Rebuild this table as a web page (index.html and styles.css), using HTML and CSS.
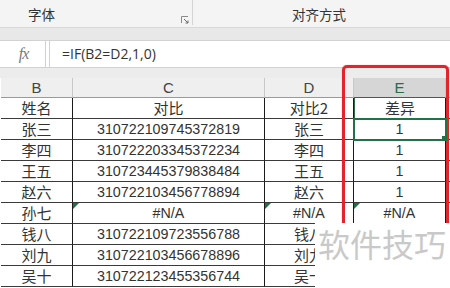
FILE: index.html
```html
<!DOCTYPE html>
<html>
<head>
<meta charset="utf-8">
<link rel="stylesheet" href="styles.css">
</head>
<body>
<div class="page">
  <div class="ribbon">
    <div class="group group-font">
      <span class="group-label">字体</span>
      <svg class="launcher" width="8" height="8" viewBox="0 0 8 8">
        <path d="M0.5 7V0.5H7" fill="none" stroke="#8a8a8a" stroke-width="1"/>
        <path d="M3 3L7 7M7 4.5V7H4.5" fill="none" stroke="#6a6a6a" stroke-width="1"/>
      </svg>
    </div>
    <div class="group group-align">
      <span class="group-label">对齐方式</span>
    </div>
  </div>
  <div class="strip"></div>
  <div class="fbar">
    <div class="fx-box"><span class="fx">fx</span></div>
    <div class="formula">=IF(B2=D2,1,0)</div>
  </div>
  <div class="gap"></div>
  <div class="sheet">
    <div class="hd">B</div><div class="hd">C</div><div class="hd">D</div><div class="hd hd-sel">E</div><div class="hd hd-f"></div>

    <div class="c cn">姓名</div><div class="c cn">对比</div><div class="c cn">对比2</div><div class="c cn e-top">差异</div><div class="c f"></div>
    <div class="c cn">张三</div><div class="c num">310722109745372819</div><div class="c cn">张三</div><div class="c num sel">1<span class="handle"></span></div><div class="c f"></div>
    <div class="c cn">李四</div><div class="c num">310722203345372234</div><div class="c cn">李四</div><div class="c num">1</div><div class="c f"></div>
    <div class="c cn">王五</div><div class="c num">310723445379838484</div><div class="c cn">王五</div><div class="c num">1</div><div class="c f"></div>
    <div class="c cn">赵六</div><div class="c num">310722103456778894</div><div class="c cn">赵六</div><div class="c num">1</div><div class="c f"></div>
    <div class="c cn">孙七</div><div class="c num err">#N/A</div><div class="c num err">#N/A</div><div class="c num err">#N/A</div><div class="c f"></div>
    <div class="c cn">钱八</div><div class="c num">310722109723556788</div><div class="c cn">钱八</div><div class="c num"></div><div class="c f"></div>
    <div class="c cn">刘九</div><div class="c num">310722103456678896</div><div class="c cn">刘九</div><div class="c num"></div><div class="c f"></div>
    <div class="c cn">吴十</div><div class="c num">310722123455356744</div><div class="c cn">吴十</div><div class="c num"></div><div class="c f"></div>
  </div>
  <div class="highlight"></div>
  <div class="watermark">软件技巧</div>
</div>
</body>
</html>
```

FILE: styles.css
```css
html, body {
  margin: 0;
  padding: 0;
}
body {
  width: 450px;
  height: 288px;
  overflow: hidden;
  background: #ffffff;
  font-family: "Noto Sans CJK SC", "Liberation Sans", sans-serif;
  color: #333333;
}
.page {
  position: relative;
  width: 450px;
  height: 288px;
  overflow: hidden;
}
.ribbon {
  height: 28px;
  box-sizing: border-box;
  background: #f4f4f4;
  border-bottom: 1px solid #d8d8d8;
  display: flex;
}
.group {
  position: relative;
  height: 25px;
  display: flex;
  align-items: flex-end;
}
.group-font {
  width: 193px;
  border-right: 1px solid #d4d4d4;
  padding-left: 28px;
  box-sizing: border-box;
}
.group-align {
  padding-left: 99px;
}
.group-label {
  font-size: 13.5px;
  line-height: 14px;
  color: #333;
  padding-bottom: 4px;
}
.launcher {
  position: absolute;
  left: 181px;
  top: 16px;
}
.strip {
  height: 12px;
  background: #e8e8e8;
}
.fbar {
  height: 28px;
  box-sizing: border-box;
  background: #ffffff;
  border-top: 1px solid #d2d2d2;
  border-bottom: 1px solid #d2d2d2;
  display: flex;
}
.fx-box {
  width: 46px;
  box-sizing: border-box;
  border-right: 1px solid #d2d2d2;
  display: flex;
  align-items: center;
  justify-content: center;
}
.fx {
  font-family: "Liberation Serif", serif;
  font-style: italic;
  font-size: 16px;
  color: #7a7a7a;
  letter-spacing: -1px;
  margin-left: 2px;
}
.formula {
  flex: 1;
  margin-left: 3px;
  border-left: 1px solid #d2d2d2;
  padding-left: 12px;
  font-family: "Open Sans", "Liberation Sans", sans-serif;
  font-size: 14px;
  line-height: 26px;
  color: #333;
}
.gap {
  height: 10px;
  background: #ececec;
}
.sheet {
  display: grid;
  grid-template-columns: 72px 192px 89px 92px 5px;
  grid-template-rows: 20px repeat(9, 21px);
  padding-left: 1px;
  background: #ffffff;
}
.hd {
  background: #efefef;
  border-right: 1px solid #c8c8c8;
  border-bottom: 1px solid #9a9a9a;
  box-sizing: border-box;
  font-family: "Liberation Sans", sans-serif;
  font-size: 15px;
  line-height: 19px;
  text-align: center;
  color: #444;
}
.hd-sel {
  background: #d6d6d6;
  color: #2b6b45;
  border-bottom: 1px solid #217346;
}
.hd-f {
  border-right: none;
}
.c {
  position: relative;
  box-sizing: border-box;
  border-right: 1px solid #1a1a1a;
  border-bottom: 1px solid #3a3a3a;
  text-align: center;
  color: #333;
  overflow: hidden;
  white-space: nowrap;
}
.cn {
  font-family: "Noto Sans CJK SC", sans-serif;
  font-size: 15px;
  line-height: 20px;
}
.num {
  font-family: "Liberation Sans", sans-serif;
  font-size: 14.3px;
  line-height: 21px;
}
.f {
  border-right: none;
}
.e-top {
  border-left: 1px solid #2d6b47;
}
.sel {
  outline: 2px solid #217346;
  outline-offset: -1px;
  z-index: 2;
}
.handle {
  position: absolute;
  right: -3px;
  bottom: -3px;
  width: 5px;
  height: 5px;
  background: #217346;
  border: 1px solid #fff;
  box-sizing: content-box;
}
.err::before {
  content: "";
  position: absolute;
  left: 0;
  top: 0;
  width: 0;
  height: 0;
  border-top: 6px solid #1e7145;
  border-right: 6px solid transparent;
}
.highlight {
  position: absolute;
  left: 342px;
  top: 65px;
  width: 107px;
  height: 260px;
  box-sizing: border-box;
  border: 3px solid #e3242b;
  border-radius: 5px;
  box-shadow: 0 0 1px rgba(227, 36, 43, 0.6);
}
.watermark {
  position: absolute;
  left: 315px;
  top: 223px;
  width: 135px;
  height: 65px;
  background: #ffffff;
  font-family: "Noto Sans CJK SC", sans-serif;
  font-size: 32px;
  line-height: 40px;
  color: #c9c9c9;
  padding-left: 3px;
  box-sizing: border-box;
}
```
